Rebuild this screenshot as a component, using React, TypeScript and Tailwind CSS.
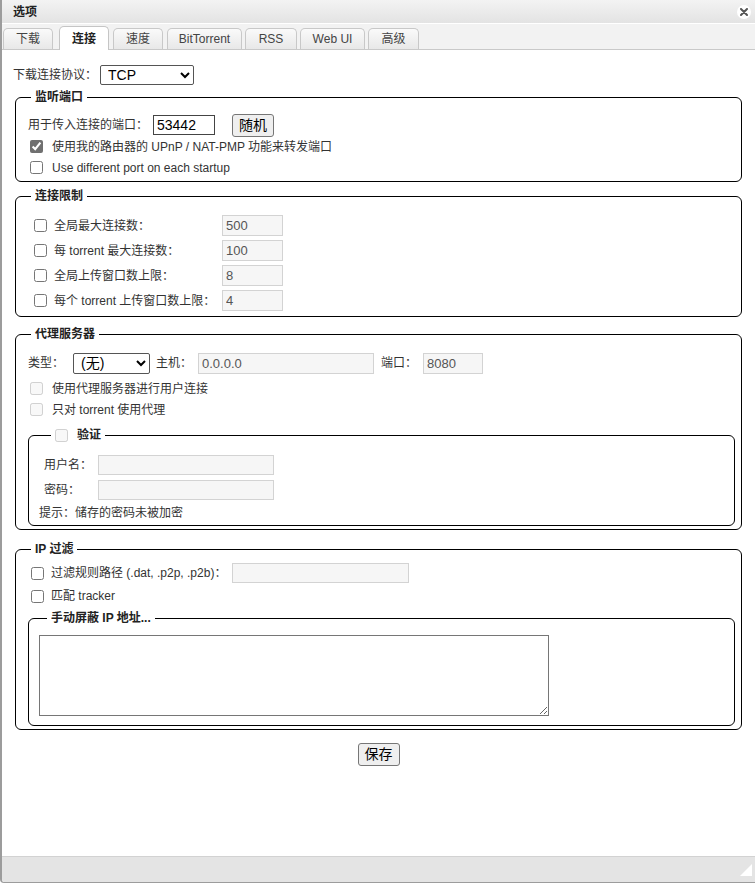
import React from "react";

/** 标签页定义 (宽度、间距按截图固定) */
const TABS: { label: string; cls: string; active?: boolean }[] = [
  { label: "下载", cls: "ml-[1px] w-[50px]" },
  { label: "连接", cls: "ml-[6px] w-[50px]", active: true },
  { label: "速度", cls: "ml-[4px] w-[50px]" },
  { label: "BitTorrent", cls: "ml-[4px] w-[75px]" },
  { label: "RSS", cls: "ml-[3px] w-[52px]" },
  { label: "Web UI", cls: "ml-[3px] w-[65px]" },
  { label: "高级", cls: "ml-[3px] w-[51px]" },
];

const LIMITS = [
  { label: "全局最大连接数：", value: "500" },
  { label: "每 torrent 最大连接数：", value: "100" },
  { label: "全局上传窗口数上限：", value: "8" },
  { label: "每个 torrent 上传窗口数上限：", value: "4" },
];

const disabledInput =
  "h-[21px] border border-[#d3d3d3] bg-[#f6f6f6] px-[3px] text-[13px] text-[#555] outline-none";

function Checkbox({ checked, disabled, className = "" }: { checked?: boolean; disabled?: boolean; className?: string }) {
  return (
    <input
      type="checkbox"
      defaultChecked={checked}
      disabled={disabled}
      className={`w-[13px] h-[13px] m-0 shrink-0 accent-[#707070] ${className}`}
    />
  );
}

function Legend({ children, className = "" }: { children: React.ReactNode; className?: string }) {
  return (
    <legend className={`px-[4px] h-[16px] leading-[16px] font-bold text-[#222] ${className}`}>{children}</legend>
  );
}

export default function App() {
  return (
    <div className="w-[755px] h-[883px] flex flex-col bg-white border-l-2 border-b border-[#9c9c9c] rounded-bl-[4px] overflow-hidden font-['Liberation_Sans','Noto_Sans_CJK_SC',sans-serif] text-[12px] text-[#333]">
      {/* 标题栏 */}
      <div className="h-[24px] shrink-0 flex items-center justify-between pl-[11px] pr-[4px] bg-gradient-to-b from-[#f3f3f3] to-[#e3e3e3] border-b border-white">
        <span className="font-bold text-[#222]">选项</span>
        <span className="w-[14px] h-[14px] rounded-full bg-white flex items-center justify-center">
          <svg width="8" height="8" viewBox="0 0 8 8">
            <path d="M1 1L7 7M7 1L1 7" stroke="#555" strokeWidth="2" strokeLinecap="round" />
          </svg>
        </span>
      </div>

      {/* 标签页 */}
      <div className="h-[26px] shrink-0 flex items-end bg-[#f2f2f2] border-b border-[#c9c9c9]">
        {TABS.map((t) =>
          t.active ? (
            <div
              key={t.label}
              className={`${t.cls} h-[24px] -mb-px flex items-center justify-center rounded-t-[5px] border border-b-0 border-[#c5c5c5] bg-white font-bold text-[#222]`}
            >
              {t.label}
            </div>
          ) : (
            <div
              key={t.label}
              className={`${t.cls} h-[21px] flex items-center justify-center rounded-t-[5px] border border-b-0 border-[#c8c8c8] bg-gradient-to-b from-[#fafafa] to-[#e8e8e8] text-[#444]`}
            >
              {t.label}
            </div>
          )
        )}
      </div>

      {/* 内容 */}
      <div className="flex-1 px-[11px]">
        <div className="mt-[15px] h-[20px] flex items-center">
          <span>下载连接协议：</span>
          <select className="ml-[3px] w-[94px] h-[20px] border border-[#555] rounded-[2px] pl-[3px] text-[14px] text-black">
            <option>TCP</option>
          </select>
        </div>

        {/* 监听端口 */}
        <fieldset className="mx-[2px] mt-[4px] border border-black rounded-[6px] pl-[12px] pr-[6px] pt-[9px] pb-[3px]">
          <Legend className="ml-[3px]">监听端口</Legend>
          <div className="h-[22px] flex items-center">
            <span>用于传入连接的端口：</span>
            <input
              defaultValue="53442"
              className="ml-[5px] w-[62px] h-[20px] border border-[#444] px-[3px] text-[14px] text-black outline-none"
            />
            <button className="ml-[17px] w-[42px] h-[23px] bg-[#efefef] border border-[#767676] rounded-[3px] text-[14px] text-black">
              随机
            </button>
          </div>
          <div className="h-[21px] flex items-center">
            <Checkbox checked className="ml-[2px]" />
            <span className="ml-[9px]">使用我的路由器的 UPnP / NAT-PMP 功能来转发端口</span>
          </div>
          <div className="h-[21px] flex items-center">
            <Checkbox className="ml-[2px]" />
            <span className="ml-[9px]">Use different port on each startup</span>
          </div>
        </fieldset>

        {/* 连接限制 */}
        <fieldset className="mx-[2px] mt-[6px] border border-black rounded-[6px] pl-[12px] pr-[6px] pt-[9px] pb-[3px]">
          <Legend className="ml-[3px]">连接限制</Legend>
          {LIMITS.map((row) => (
            <div key={row.label} className="h-[25px] flex items-center">
              <Checkbox className="ml-[6px]" />
              <span className="ml-[7px] w-[168px]">{row.label}</span>
              <input disabled defaultValue={row.value} className={`w-[61px] ${disabledInput}`} />
            </div>
          ))}
        </fieldset>

        {/* 代理服务器 */}
        <fieldset className="mx-[2px] mt-[9px] border border-black rounded-[6px] pl-[12px] pr-[6px] pt-[10px] pb-[3px]">
          <Legend className="ml-[3px]">代理服务器</Legend>
          <div className="h-[22px] flex items-center">
            <span>类型：</span>
            <select className="ml-[9px] w-[77px] h-[21px] border border-[#555] rounded-[2px] pl-[3px] text-[14px] text-black">
              <option>(无)</option>
            </select>
            <span className="ml-[6px]">主机：</span>
            <input disabled defaultValue="0.0.0.0" className={`ml-[6px] w-[176px] ${disabledInput}`} />
            <span className="ml-[7px]">端口：</span>
            <input disabled defaultValue="8080" className={`ml-[6px] w-[60px] ${disabledInput}`} />
          </div>
          <div className="mt-[4px] h-[21px] flex items-center">
            <Checkbox disabled className="ml-[2px]" />
            <span className="ml-[9px]">使用代理服务器进行用户连接</span>
          </div>
          <div className="h-[21px] flex items-center">
            <Checkbox disabled className="ml-[2px]" />
            <span className="ml-[9px]">只对 torrent 使用代理</span>
          </div>

          {/* 验证 */}
          <fieldset className="mt-[7px] border border-black rounded-[6px] pl-[10px] pr-[6px] pt-[12px] pb-[4px]">
            <legend className="ml-[12px] px-[4px] h-[16px] flex items-center">
              <Checkbox disabled />
              <span className="ml-[9px] font-bold text-[#222]">验证</span>
            </legend>
            <div className="h-[20px] flex items-center">
              <span className="ml-[5px] w-[54px]">用户名：</span>
              <input disabled className={`w-[176px] !h-[20px] ${disabledInput}`} />
            </div>
            <div className="mt-[5px] h-[20px] flex items-center">
              <span className="ml-[5px] w-[54px]">密码：</span>
              <input disabled type="password" className={`w-[176px] !h-[20px] ${disabledInput}`} />
            </div>
            <div className="mt-[5px] h-[16px] leading-[16px]">提示：储存的密码未被加密</div>
          </fieldset>
        </fieldset>

        {/* IP 过滤 */}
        <fieldset className="mx-[2px] mt-[11px] border border-black rounded-[6px] pl-[12px] pr-[6px] pt-[6px] pb-[3px]">
          <Legend className="ml-[3px]">IP 过滤</Legend>
          <div className="h-[20px] flex items-center">
            <Checkbox className="ml-[3px]" />
            <span className="ml-[7px] w-[181px]">过滤规则路径 (.dat, .p2p, .p2b)：</span>
            <input disabled className={`w-[177px] !h-[20px] ${disabledInput}`} />
          </div>
          <div className="mt-[3px] h-[20px] flex items-center">
            <Checkbox className="ml-[3px]" />
            <span className="ml-[7px]">匹配 tracker</span>
          </div>

          <fieldset className="mt-[4px] border border-black rounded-[6px] pl-[10px] pr-[6px] pt-[9px] pb-[9px]">
            <Legend className="ml-[8px]">手动屏蔽 IP 地址...</Legend>
            <textarea className="block w-[510px] h-[81px] border border-[#767676] resize-y outline-none" />
          </fieldset>
        </fieldset>

        <div className="mt-[13px] flex justify-center">
          <button className="w-[42px] h-[23px] bg-[#efefef] border border-[#767676] rounded-[3px] text-[14px] text-black">
            保存
          </button>
        </div>
      </div>

      {/* 底部状态栏 */}
      <div className="h-[26px] shrink-0 relative bg-[#e4e4e4] border-t border-[#d2d2d2]">
        <svg className="absolute right-[3px] bottom-[6px]" width="12" height="12" viewBox="0 0 12 12">
          <polygon points="12,0 12,12 0,12" fill="#ffffff" />
        </svg>
      </div>
    </div>
  );
}
